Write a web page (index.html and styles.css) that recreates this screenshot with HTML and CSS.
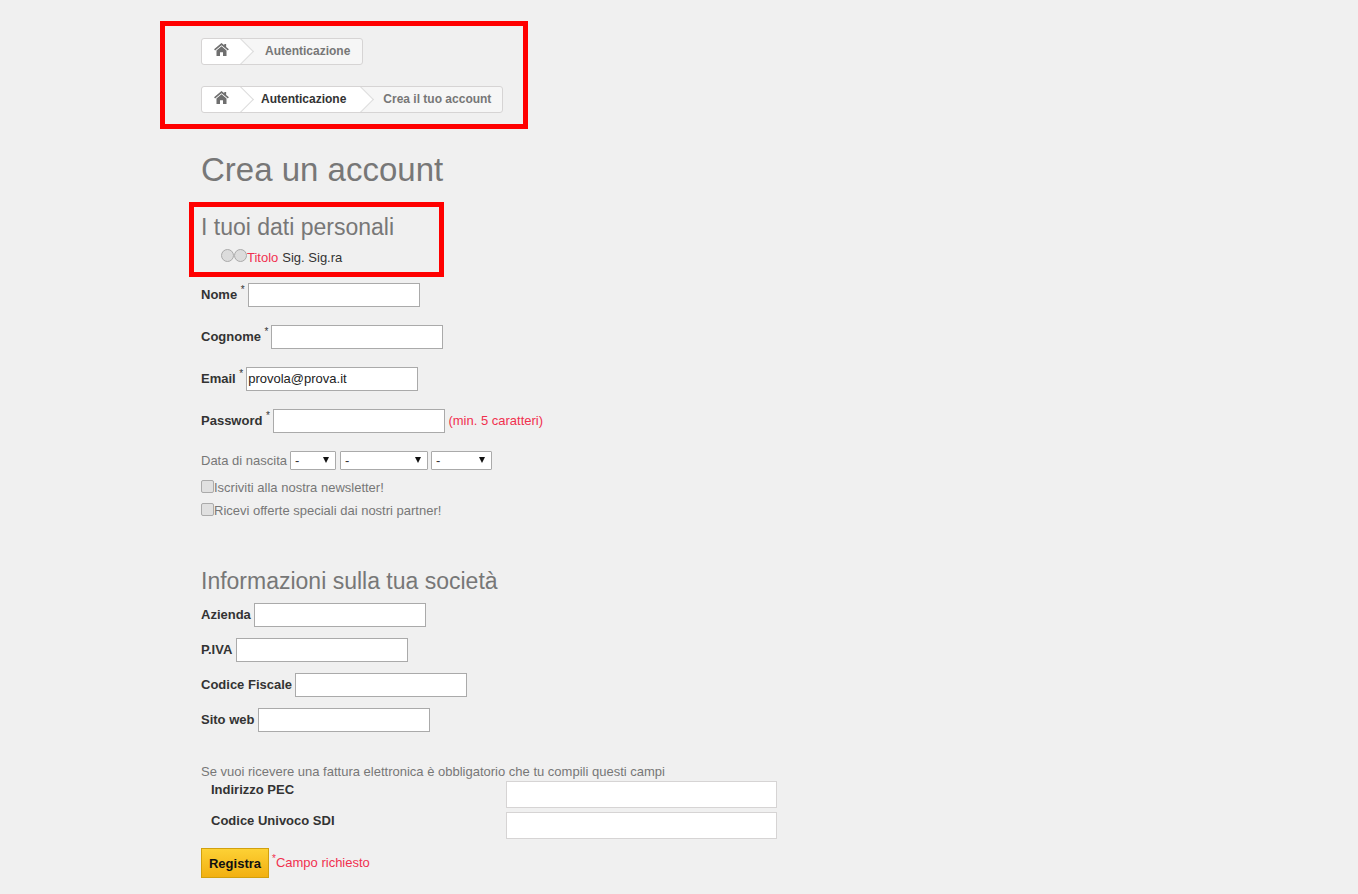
FILE: index.html
```html
<!DOCTYPE html>
<html lang="it">
<head>
<meta charset="utf-8">
<title>Crea un account</title>
<link rel="stylesheet" href="styles.css">
</head>
<body>
<div class="mark mark-a"></div>
<div class="mark mark-b"></div>
<main class="page">
  <nav class="crumb crumb-first">
    <a class="crumb-home"><svg class="home" viewBox="0 0 16 14"><path d="M8 0 0 6.800l1.100 1.300L8 2.500l6.900 5.600L16 6.800l-3-2.600V1h-2v1.500z"/><path d="M2.600 8.200 8 3.400l5.400 4.800V14H9.600v-4H6.400v4H2.600z"/></svg></a>
    <span class="crumb-item crumb-last crumb-pad">Autenticazione</span>
  </nav>
  <nav class="crumb crumb-second">
    <a class="crumb-home"><svg class="home" viewBox="0 0 16 14"><path d="M8 0 0 6.800l1.100 1.300L8 2.500l6.900 5.600L16 6.800l-3-2.600V1h-2v1.500z"/><path d="M2.600 8.200 8 3.400l5.400 4.800V14H9.600v-4H6.400v4H2.600z"/></svg></a>
    <a class="crumb-item crumb-link">Autenticazione</a>
    <span class="crumb-item crumb-last">Crea il tuo account</span>
  </nav>

  <h1 class="title">Crea un account</h1>
  <h2 class="section section-personal">I tuoi dati personali</h2>
  <div class="gender">
    <span class="radio"></span><span class="radio"></span><span class="pink gender-text">Titolo</span><span class="dark gender-text gender-opts">Sig. Sig.ra</span>
  </div>

  <div class="field field-first"><label class="lbl">Nome <sup class="star">*</sup></label><input class="box" type="text"></div>
  <div class="field"><label class="lbl">Cognome <sup class="star">*</sup></label><input class="box" type="text"></div>
  <div class="field"><label class="lbl">Email <sup class="star">*</sup></label><input class="box box-email" type="text" value="provola@prova.it"></div>
  <div class="field"><label class="lbl">Password <sup class="star">*</sup></label><input class="box" type="password"><span class="pink hint">(min. 5 caratteri)</span></div>

  <div class="dob">
    <span class="muted nudge">Data di nascita</span>
    <span class="sel sel-d"><select><option>-</option></select></span>
    <span class="sel sel-m"><select><option>-</option></select></span>
    <span class="sel sel-y"><select><option>-</option></select></span>
  </div>
  <div class="check check-first"><span class="tick"></span><span class="muted nudge">Iscriviti alla nostra newsletter!</span></div>
  <div class="check"><span class="tick"></span><span class="muted nudge">Ricevi offerte speciali dai nostri partner!</span></div>

  <h2 class="section section-company">Informazioni sulla tua società</h2>
  <div class="row"><label class="lbl">Azienda</label><input class="box" type="text"></div>
  <div class="row"><label class="lbl">P.IVA</label><input class="box" type="text"></div>
  <div class="row"><label class="lbl">Codice Fiscale</label><input class="box" type="text"></div>
  <div class="row"><label class="lbl">Sito web</label><input class="box" type="text"></div>

  <p class="muted invoice">Se vuoi ricevere una fattura elettronica è obbligatorio che tu compili questi campi</p>
  <div class="pec"><label class="lbl pec-lbl">Indirizzo PEC</label><input class="pec-box" type="text"></div>
  <div class="pec pec-second"><label class="lbl pec-lbl">Codice Univoco SDI</label><input class="pec-box" type="text"></div>

  <div class="submit"><button class="btn" type="button">Registra</button><span class="pink req"><sup class="req-star">*</sup>Campo richiesto</span></div>
</main>
</body>
</html>
```
FILE: styles.css
```css
* { box-sizing: border-box; }
html, body { margin: 0; padding: 0; }
body {
  background: #f0f0f0;
  font-family: "Liberation Sans", Arial, sans-serif;
  font-size: 13px;
  line-height: 20px;
  color: #333;
  height: 894px;
  overflow: hidden;
  position: relative;
}
.mark { position: absolute; border: 5px solid #ff0000; pointer-events: none; }
.mark-a { left: 160px; top: 21px; width: 368px; height: 108px; }
.mark-b { left: 189px; top: 202px; width: 255px; height: 75px; }
.page { padding: 38px 0 0 201px; width: 900px; }

.crumb {
  display: flex;
  width: max-content;
  height: 27px;
  background: #f6f6f6;
  border: 1px solid #d6d4d4;
  border-radius: 3px;
  font-size: 12px;
  font-weight: bold;
  line-height: 25px;
  color: #777;
  overflow: hidden;
}
.crumb-second { margin-top: 21px; }
.crumb-home {
  position: relative;
  width: 39px;
  background: #fff;
  border-radius: 3px 0 0 3px;
  padding: 4px 0 0 12px;
  line-height: 0;
}
.crumb-home::after, .crumb-link::after {
  content: "";
  position: absolute;
  right: -9px;
  top: 3px;
  width: 18px;
  height: 18px;
  background: #fff;
  border: solid #dcdcdc;
  border-width: 1px 1px 0 0;
  transform: rotate(45deg);
  z-index: 1;
}
.home { width: 15px; height: 13px; fill: #6f6f6f; display: block; }
.crumb-item { position: relative; padding: 0 11px 0 22px; }
.crumb-pad { padding: 0 12px 0 24px; }
.crumb-link { background: #fff; color: #333; padding: 0 15px 0 20px; }
.crumb-last { color: #777; }

.title { margin: 37px 0 0; font-size: 33px; line-height: 40px; font-weight: normal; color: #777; }
.section { margin: 0; font-size: 23px; font-weight: normal; line-height: 30px; color: #777; }
.section-personal { margin-top: 22px; }
.gender { display: flex; align-items: center; height: 20px; margin-top: 5px; padding-left: 20px; }
.gender-text { padding-top: 2px; }
.radio { width: 13px; height: 13px; border-radius: 50%; background: #dcdcdc; border: 1px solid #aaa; position: relative; top: -2px; }
.pink { color: #f0304f; }
.dark { color: #333; }
.gender-opts { margin-left: 4px; }

.lbl { font-weight: bold; color: #333; }
.star { font-size: 10px; font-weight: normal; color: #333; line-height: 0; position: relative; top: -1px; vertical-align: super; }
.field { display: flex; align-items: center; height: 24px; margin-top: 18px; }
.field-first { margin-top: 16px; }
.field .lbl { margin-right: 3px; }
.box { width: 172px; height: 24px; border: 1px solid #aaa; background: #fff; padding: 0 1px 1px; font: 13px "Liberation Sans", Arial, sans-serif; color: #222; outline: 0; border-radius: 0; }
.hint { margin-left: 3.500px; }

.dob { display: flex; align-items: center; height: 20px; margin-top: 17px; }
.muted { color: #777; }
.nudge { padding-top: 2px; }
.sel { position: relative; display: block; height: 19px; margin-left: 4px; }
.sel select {
  appearance: none;
  display: block;
  width: 100%;
  height: 19px;
  background: #fff;
  border: 1px solid #aaa;
  border-radius: 1px;
  font: 13px "Liberation Sans", Arial, sans-serif;
  padding: 0 0 0 4px;
  color: #333;
}
.sel::after {
  content: "";
  position: absolute;
  right: 7px;
  top: 6px;
  border: 3px solid transparent;
  border-top: 6px solid #111;
  border-bottom: 0;
}
.sel-d { width: 46px; margin-left: 3px; }
.sel-m { width: 88px; }
.sel-y { width: 61px; margin-left: 3px; }

.check { display: flex; align-items: center; height: 20px; margin-top: 3px; }
.check-first { margin-top: 7px; }
.tick { width: 13px; height: 13px; background: #e0e0e0; border: 1px solid #aaa; border-radius: 2px; position: relative; top: -1px; }

.section-company { margin-top: 46px; }
.row { display: flex; align-items: center; height: 24px; margin-top: 11px; }
.section-company + .row { margin-top: 7px; }
.row .lbl { margin-right: 3.200px; }

.invoice { margin: 30px 0 0; height: 19px; }
.pec { display: flex; align-items: flex-start; height: 27px; }
.pec-second { margin-top: 4px; }
.pec-lbl { width: 305px; padding-left: 10px; line-height: 18px; }
.pec-box { width: 271px; height: 27px; border: 1px solid #d6d4d4; background: #fff; border-radius: 0; outline: 0; }

.submit { display: flex; align-items: center; height: 30px; margin-top: 9px; }
.btn {
  width: 68px;
  height: 30px;
  background: linear-gradient(#fdd135, #f2b012);
  border: 1px solid #d1a00e;
  border-radius: 0;
  font: bold 13px "Liberation Sans", Arial, sans-serif;
  color: #111;
  padding: 0;
}
.req { margin-left: 3px; }
.req-star { font-size: 10px; line-height: 0; }
```
